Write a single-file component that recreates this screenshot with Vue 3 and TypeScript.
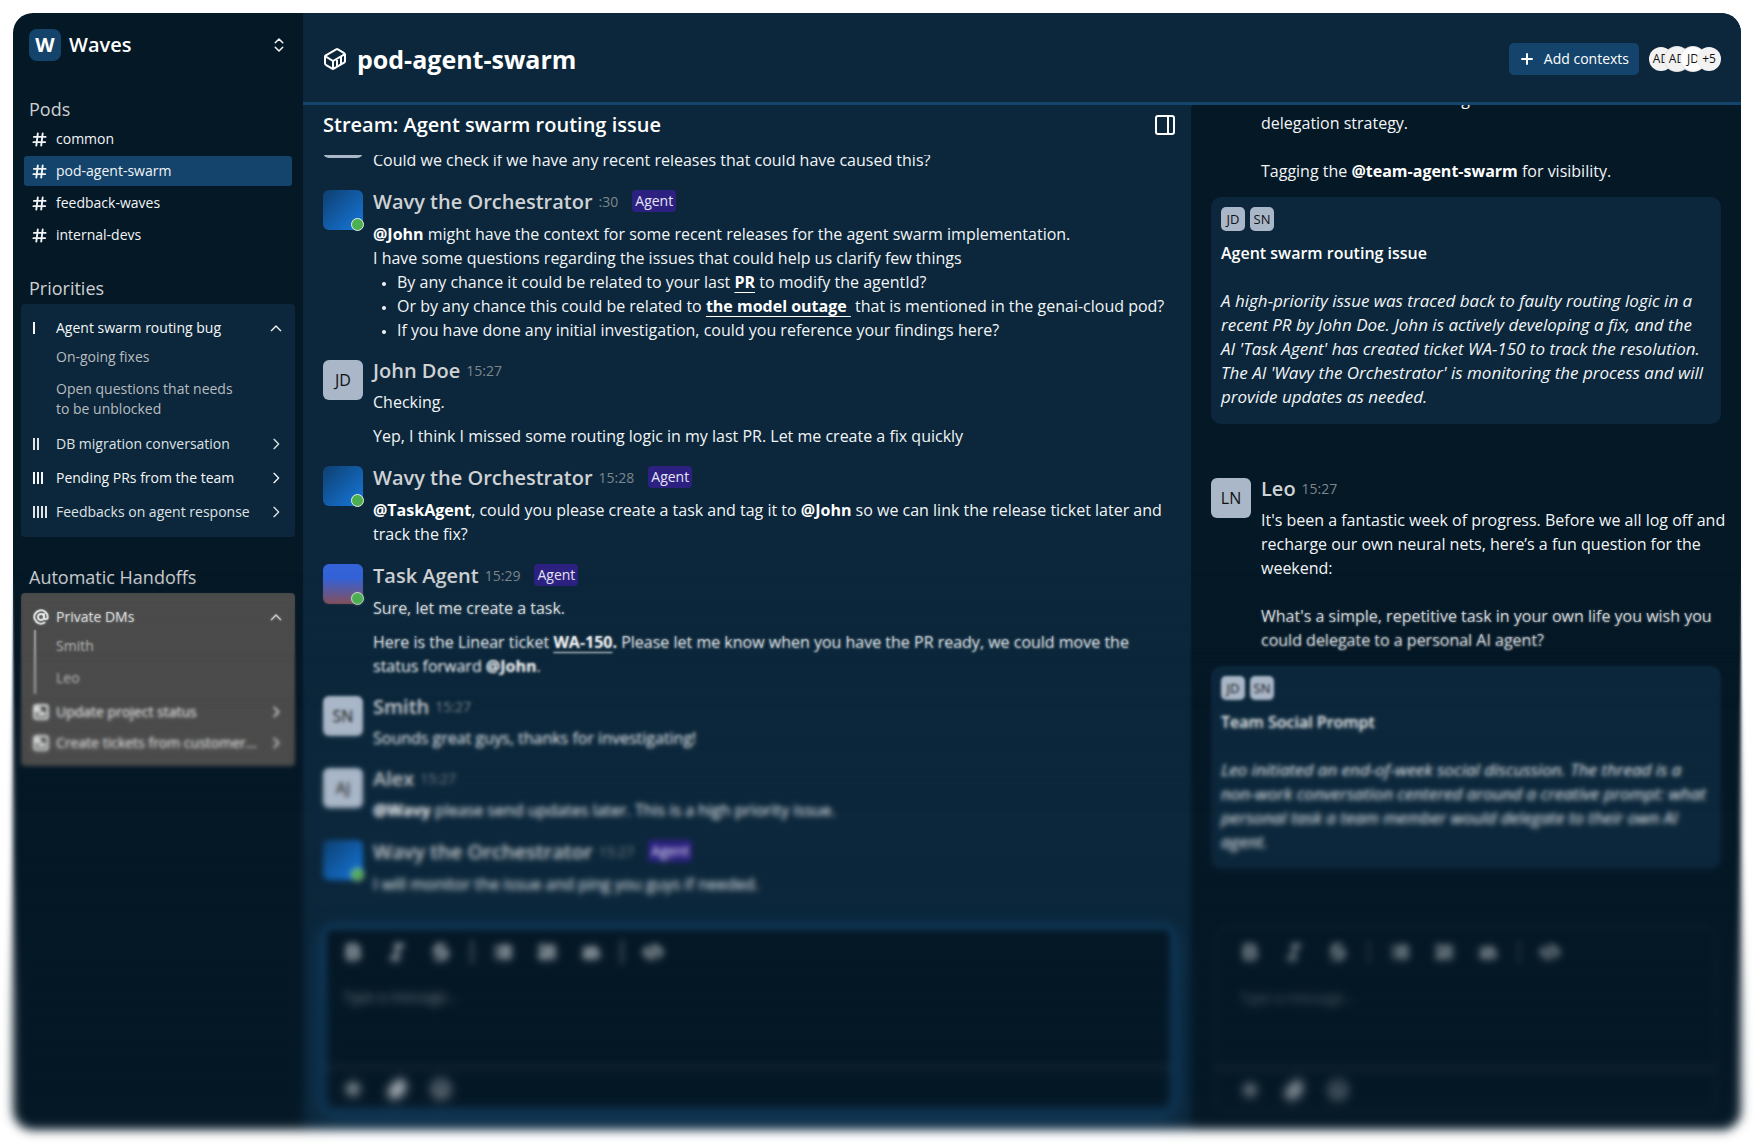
<script setup lang="ts">
import { ref } from 'vue'

type Kind = 'text' | 'bold' | 'link' | 'break'
interface Part { kind: Kind; text: string }
interface Block { type: 'para' | 'list'; items: Part[][] }
interface Message {
  id: number
  author?: string
  time?: string
  initials?: string
  avatar: 'plain' | 'wavy' | 'task'
  agent: boolean
  blocks: Block[]
}

const t = (text: string): Part => ({ kind: 'text', text })
const b = (text: string): Part => ({ kind: 'bold', text })
const a = (text: string): Part => ({ kind: 'link', text })
const br: Part = { kind: 'break', text: '' }
const para = (...parts: Part[]): Block => ({ type: 'para', items: [parts] })

const pods = ['common', 'pod-agent-swarm', 'feedback-waves', 'internal-devs']
const activePod = ref('pod-agent-swarm')

const priorities = [
  { bars: 2, label: 'DB migration conversation', strong: false },
  { bars: 3, label: 'Pending PRs from the team', strong: true },
  { bars: 4, label: 'Feedbacks on agent response', strong: false },
]
const handoffs = ['Update project status', 'Create tickets from customer...']
const members = ['AD', 'AD', 'JD', '+5']

const messages: Message[] = [
  {
    id: 1, avatar: 'plain', agent: false,
    blocks: [para(t('Could we check if we have any recent releases that could have caused this?'))],
  },
  {
    id: 2, author: 'Wavy the Orchestrator', time: ':30', avatar: 'wavy', agent: true,
    blocks: [
      para(
        b('@John'), t(' might have the context for some recent releases for the agent swarm implementation.'), br,
        t('I have some questions regarding the issues that could help us clarify few things'),
      ),
      {
        type: 'list',
        items: [
          [t('By any chance it could be related to your last '), a('PR'), t(' to modify the agentId?')],
          [t('Or by any chance this could be related to '), a('the model outage\u00a0'), t(' that is mentioned in the genai-cloud pod?')],
          [t('If you have done any initial investigation, could you reference your findings here?')],
        ],
      },
    ],
  },
  {
    id: 3, author: 'John Doe', time: '15:27', initials: 'JD', avatar: 'plain', agent: false,
    blocks: [
      para(t('Checking.')),
      para(t('Yep, I think I missed some routing logic in my last PR. Let me create a fix quickly')),
    ],
  },
  {
    id: 4, author: 'Wavy the Orchestrator', time: '15:28', avatar: 'wavy', agent: true,
    blocks: [
      para(
        b('@TaskAgent'), t(', could you please create a task and tag it to '), b('@John'),
        t(' so we can link the release ticket later and'), br, t('track the fix?'),
      ),
    ],
  },
  {
    id: 5, author: 'Task Agent', time: '15:29', avatar: 'task', agent: true,
    blocks: [
      para(t('Sure, let me create a task.')),
      para(
        t('Here is the Linear ticket '), a('WA-150'), b('.'),
        t(' Please let me know when you have the PR ready, we could move the'), br,
        t('status forward '), b('@John'), t('.'),
      ),
    ],
  },
  {
    id: 6, author: 'Smith', time: '15:27', initials: 'SN', avatar: 'plain', agent: false,
    blocks: [para(t('Sounds great guys, thanks for investigating!'))],
  },
  {
    id: 7, author: 'Alex', time: '15:27', initials: 'AJ', avatar: 'plain', agent: false,
    blocks: [para(b('@Wavy'), t(' please send updates later. This is a high priority issue.'))],
  },
  {
    id: 8, author: 'Wavy the Orchestrator', time: '15:27', avatar: 'wavy', agent: true,
    blocks: [para(t('I will monitor the issue and ping you guys if needed.'))],
  },
]

const formatTools = [
  { name: 'Bold', paths: ['M6 12h9a4 4 0 0 1 0 8H7a1 1 0 0 1-1-1V5a1 1 0 0 1 1-1h7a4 4 0 0 1 0 8'], width: 4 },
  { name: 'Italic', paths: ['M19 4h-9', 'M14 20H5', 'M15 4 9 20'], width: 4 },
  { name: 'Strikethrough', paths: ['M16 4H9a3 3 0 0 0-2.8 4', 'M14 12a4 4 0 0 1 0 8H6', 'M4 12h16'], width: 4 },
]
const listTools = [
  { name: 'Bulleted list', paths: ['M9 6h12', 'M9 12h12', 'M9 18h12', 'M4 6h.01', 'M4 12h.01', 'M4 18h.01'], width: 4 },
  { name: 'Numbered list', paths: ['M10 6h11', 'M10 12h11', 'M10 18h11', 'M4 5l1-1v5', 'M4 15h3l-3 4h3'], width: 4 },
  { name: 'Quote', paths: ['M4 8h9', 'M4 14h7', 'M14 11l3-4 4 10', 'M4 18h14'], width: 4 },
]
const codeTools = [
  { name: 'Code', paths: ['m18 17 5-5-5-5', 'm6 7-5 5 5 5', 'm14 4-4 16'], width: 4 },
]
const toolGroups = [formatTools, listTools, codeTools]
const attachTools = [
  { name: 'Add', paths: ['M12 4v16', 'M4 12h16', 'M7 7l10 10', 'M17 7 7 17'], width: 3 },
  { name: 'Attach file', paths: ['m16 6-8.4 8.6a2 2 0 0 0 2.8 2.8l8.4-8.6a4 4 0 1 0-5.6-5.6L4.8 11.9a6 6 0 1 0 8.5 8.5l8.4-8.6'], width: 4 },
  { name: 'Emoji', paths: ['M22 12a10 10 0 1 1-20 0 10 10 0 0 1 20 0', 'M8 14s1.5 2 4 2 4-2 4-2', 'M9 9h.01', 'M15 9h.01'], width: 3 },
]

const streamDraft = ref('')
const threadDraft = ref('')
</script>

<template>
  <div class="page">
    <div class="window">
      <nav class="sidebar" aria-label="Workspace">
        <button class="workspace" type="button">
          <span class="logo">W</span>
          <span class="workspace-name">Waves</span>
          <svg class="icon-18" viewBox="0 0 24 24"><path d="m7 15 5 5 5-5M7 9l5-5 5 5" /></svg>
        </button>

        <section class="group">
          <h2>Pods</h2>
          <button
            v-for="pod in pods" :key="pod" type="button" class="pod"
            :class="{ active: pod === activePod }" @click="activePod = pod"
          >
            <svg class="hash" viewBox="0 0 16 16"><path d="M6.2 1.5 4.6 14.5M11.4 1.5 9.8 14.5M2 5.2h12.5M1.500 10.8h12.5" /></svg>
            <span>{{ pod }}</span>
          </button>
        </section>

        <section class="group priorities">
          <h2>Priorities</h2>
          <div class="card">
            <button type="button" class="row strong">
              <span class="bars"><i /></span>
              <span class="row-label">Agent swarm routing bug</span>
              <svg class="icon-16" viewBox="0 0 24 24"><path d="m5 16 7-7 7 7" /></svg>
            </button>
            <a class="sub" href="#fixes">On-going fixes</a>
            <a class="sub two-line" href="#questions">Open questions that needs<br />to be unblocked</a>
            <button v-for="p in priorities" :key="p.label" type="button" class="row tall" :class="{ strong: p.strong }">
              <span class="bars"><i v-for="n in p.bars" :key="n" /></span>
              <span class="row-label">{{ p.label }}</span>
              <svg class="icon-16" viewBox="0 0 24 24"><path d="m9 5 7 7-7 7" /></svg>
            </button>
          </div>
        </section>

        <section class="group handoffs">
          <h2>Automatic Handoffs</h2>
          <div class="card grey">
            <button type="button" class="row strong">
              <svg class="lead" viewBox="0 0 24 24"><circle cx="12" cy="12" r="4.5" /><path d="M16.5 7.500v6a3 3 0 0 0 5.5 0V12a10 10 0 1 0-4.500 8.300" /></svg>
              <span class="row-label">Private DMs</span>
              <svg class="icon-16" viewBox="0 0 24 24"><path d="m5 16 7-7 7 7" /></svg>
            </button>
            <div class="dms">
              <a href="#smith">Smith</a>
              <a href="#leo">Leo</a>
            </div>
            <button v-for="h in handoffs" :key="h" type="button" class="row strong">
              <svg class="lead" viewBox="0 0 24 24"><rect x="2" y="2" width="20" height="20" rx="3" /><path d="M5 6h5v5H5zM7 16h10M13 12v4M17 13v3" /></svg>
              <span class="row-label">{{ h }}</span>
              <svg class="icon-16" viewBox="0 0 24 24"><path d="m9 5 7 7-7 7" /></svg>
            </button>
          </div>
        </section>
      </nav>

      <div class="content">
        <header class="topbar">
          <svg class="icon-24" viewBox="0 0 24 24"><path d="M22 7.700c0-.6-.4-1.200-.8-1.500l-6.300-3.900a1.720 1.720 0 0 0-1.700 0l-10.300 6c-.5.2-.9.8-.9 1.400v6.600c0 .5.4 1.200.8 1.500l6.300 3.900a1.720 1.720 0 0 0 1.700 0l10.300-6c.5-.3.9-1 .9-1.500ZM10 21.900V14L2.100 9.100M10 14l11.900-6.900M14 19.800v-8.100M18 17.500V9.400" /></svg>
          <h1>pod-agent-swarm</h1>
          <button type="button" class="add">
            <svg class="icon-16" viewBox="0 0 16 16"><path d="M8 3v10M3 8h10" /></svg>
            Add contexts
          </button>
          <div class="members">
            <span v-for="(m, i) in members" :key="i" :class="'m' + i">{{ m }}</span>
          </div>
        </header>

        <div class="columns">
          <main class="stream">
            <div class="stream-head">
              <h2>Stream: Agent swarm routing issue</h2>
              <button type="button" class="plain" aria-label="Toggle side panel">
                <svg class="icon-24" viewBox="0 0 24 24"><rect x="3" y="3" width="18" height="18" rx="2" /><path d="M15 3v18" /></svg>
              </button>
            </div>

            <div class="feed">
              <article v-for="m in messages" :key="m.id" class="message">
                <div class="avatar" :class="m.avatar">{{ m.initials }}<i v-if="m.agent" class="online" /></div>
                <div class="body">
                  <div class="meta" :class="{ agent: m.agent }">
                    <strong>{{ m.author }}</strong>
                    <time>{{ m.time }}</time>
                    <span v-if="m.agent" class="badge">Agent</span>
                  </div>
                  <template v-for="(block, bi) in m.blocks" :key="bi">
                    <p v-if="block.type === 'para'"><template v-for="(part, pi) in block.items[0]" :key="pi"><br v-if="part.kind === 'break'" /><b v-else-if="part.kind === 'bold'">{{ part.text }}</b><a v-else-if="part.kind === 'link'" href="#ref">{{ part.text }}</a><template v-else>{{ part.text }}</template></template></p>
                    <ul v-else>
                      <li v-for="(item, ii) in block.items" :key="ii"><template v-for="(part, pi) in item" :key="pi"><a v-if="part.kind === 'link'" href="#ref">{{ part.text }}</a><template v-else>{{ part.text }}</template></template></li>
                    </ul>
                  </template>
                </div>
              </article>
            </div>

            <form class="composer focused" @submit.prevent>
              <div class="tools">
                <template v-for="(group, gi) in toolGroups" :key="gi">
                  <i v-if="gi > 0" class="sep" />
                  <button v-for="tool in group" :key="tool.name" type="button" :aria-label="tool.name">
                    <svg viewBox="0 0 24 24" :stroke-width="tool.width"><path v-for="p in tool.paths" :key="p" :d="p" /></svg>
                  </button>
                </template>
              </div>
              <textarea v-model="streamDraft" aria-label="Message the stream" placeholder="Type a message..." />
              <div class="tools bottom">
                <button v-for="tool in attachTools" :key="tool.name" type="button" :aria-label="tool.name">
                  <svg viewBox="0 0 24 24" :stroke-width="tool.width"><path v-for="p in tool.paths" :key="p" :d="p" /></svg>
                </button>
              </div>
            </form>
          </main>

          <aside class="thread">
            <div class="feed">
              <article class="message">
                <div class="body indent">
                  <p>Let us look into the other agent<br />delegation strategy.</p>
                  <p class="spaced">Tagging the <b>@team-agent-swarm</b> for visibility.</p>
                </div>
              </article>
              <section class="summary">
                <div class="people"><span>JD</span><span>SN</span></div>
                <h3>Agent swarm routing issue</h3>
                <p>A high-priority issue was traced back to faulty routing logic in a<br />recent PR by John Doe. John is actively developing a fix, and the<br />AI 'Task Agent' has created ticket WA-150 to track the resolution.<br />The AI 'Wavy the Orchestrator' is monitoring the process and will<br />provide updates as needed.</p>
              </section>

              <article class="message later">
                <div class="avatar plain">LN</div>
                <div class="body">
                  <div class="meta"><strong>Leo</strong><time>15:27</time></div>
                  <p>It's been a fantastic week of progress. Before we all log off and<br />recharge our own neural nets, here’s a fun question for the<br />weekend:</p>
                  <p class="spaced">What's a simple, repetitive task in your own life you wish you<br />could delegate to a personal AI agent?</p>
                </div>
              </article>
              <section class="summary">
                <div class="people"><span>JD</span><span>SN</span></div>
                <h3>Team Social Prompt</h3>
                <p>Leo initiated an end-of-week social discussion. The thread is a<br />non-work conversation centered around a creative prompt: what<br />personal task a team member would delegate to their own AI<br />agent.</p>
              </section>
            </div>

            <form class="composer" @submit.prevent>
              <div class="tools">
                <template v-for="(group, gi) in toolGroups" :key="gi">
                  <i v-if="gi > 0" class="sep" />
                  <button v-for="tool in group" :key="tool.name" type="button" :aria-label="tool.name">
                    <svg viewBox="0 0 24 24" :stroke-width="tool.width"><path v-for="p in tool.paths" :key="p" :d="p" /></svg>
                  </button>
                </template>
              </div>
              <textarea v-model="threadDraft" aria-label="Reply in thread" placeholder="Type a message..." />
              <div class="tools bottom">
                <button v-for="tool in attachTools" :key="tool.name" type="button" :aria-label="tool.name">
                  <svg viewBox="0 0 24 24" :stroke-width="tool.width"><path v-for="p in tool.paths" :key="p" :d="p" /></svg>
                </button>
              </div>
            </form>
          </aside>
        </div>
      </div>
    </div>

    <!-- progressive blur that grows towards the bottom edge -->
    <div v-for="n in 6" :key="n" class="haze" :class="'haze-' + n" />
  </div>
</template>

<style>
html,
body {
  margin: 0;
  background: #fff;
}
</style>

<style scoped>
.page {
  position: relative;
  box-sizing: border-box;
  height: 100vh;
  padding: 13px;
  overflow: hidden;
  background: #fff;
  font-family: "Open Sans", "Noto Sans", sans-serif;
  font-size: 16px;
  line-height: 24px;
  color: #f2f5f7;
}
.window {
  display: flex;
  height: 100%;
  border-radius: 20px;
  overflow: hidden;
  background: #051826;
}
h1, h2, h3, p, ul { margin: 0; }
button, textarea { font: inherit; color: inherit; }
button {
  border: 0;
  padding: 0;
  background: none;
  text-align: left;
}
svg {
  flex: none;
  fill: none;
  stroke: currentColor;
  stroke-linecap: round;
  stroke-linejoin: round;
}
.icon-16 { width: 16px; height: 16px; stroke-width: 2; }
.icon-18 { width: 18px; height: 18px; stroke-width: 2; }
.icon-24 { width: 24px; height: 24px; stroke-width: 2; }

/* sidebar */
.sidebar {
  flex: none;
  box-sizing: border-box;
  width: 290px;
  padding: 16px 8px;
}
.workspace {
  display: flex;
  align-items: center;
  gap: 8px;
  width: 100%;
  padding: 0 7px 0 8px;
}
.logo {
  width: 32px;
  border-radius: 8px;
  background: #14446b;
  color: #fff;
  font-size: 20px;
  font-weight: 700;
  line-height: 32px;
  text-align: center;
}
.workspace-name {
  flex: 1;
  color: #fff;
  font-size: 20px;
  font-weight: 600;
}
.group { margin-top: 36px; }
.group h2 {
  padding-left: 8px;
  color: #cdd0d2;
  font-size: 18px;
  font-weight: 400;
  line-height: 24px;
}
.pod {
  display: flex;
  align-items: center;
  gap: 9px;
  width: calc(100% - 6px);
  height: 30px;
  margin: 2px 3px 0;
  padding: 0 8px;
  border-radius: 3px;
  font-size: 14px;
  font-weight: 500;
}
h2 + .pod { margin-top: 3px; }
.pod.active {
  background: #14446b;
  font-weight: 400;
}
.hash { width: 15px; height: 15px; stroke-width: 2; }
.priorities { margin-top: 26px; }
.handoffs { margin-top: 28px; }
.card {
  margin-top: 4px;
  padding: 8px 11px 8px 12px;
  border-radius: 4px;
  background: #0c273b;
  font-size: 14px;
}
.card.grey { background: #4b4b4b; }
.row {
  display: flex;
  align-items: center;
  width: 100%;
  height: 31px;
  color: #dfe3e6;
}
.row.tall { height: 34px; }
.row.strong { color: #f5f7f8; font-weight: 500; }
.row-label { flex: 1; white-space: nowrap; }
.bars {
  display: flex;
  gap: 1px;
  width: 23px;
}
.bars i {
  width: 2px;
  height: 12px;
  margin-right: 1px;
  background: currentColor;
}
.sub {
  display: block;
  padding: 4px 0 4px 23px;
  color: #b7bcc0;
  line-height: 20px;
  text-decoration: none;
}
.two-line { padding: 8px 0 8px 23px; }
.lead { width: 16px; height: 16px; margin-right: 7px; stroke-width: 3; }
.dms {
  margin: -2px 0 2px 1px;
  border-left: 2px solid #a5a5a5;
  padding-left: 20px;
}
.dms a {
  display: block;
  height: 32px;
  color: #b9b9b9;
  line-height: 32px;
  text-decoration: none;
}

/* top bar */
.content {
  flex: 1;
  display: flex;
  flex-direction: column;
  min-width: 0;
  background: #0c273b;
}
.topbar {
  flex: none;
  display: flex;
  align-items: center;
  box-sizing: border-box;
  height: 92px;
  padding: 2px 20px 0;
  border-bottom: 3px solid #14446b;
  color: #fff;
}
.topbar h1 {
  flex: 1;
  margin-left: 10px;
  font-size: 25px;
  font-weight: 700;
  line-height: 32px;
}
.add {
  display: flex;
  align-items: center;
  gap: 9px;
  height: 32px;
  padding: 0 10px;
  border-radius: 5px;
  background: #14446b;
  font-size: 14px;
  font-weight: 500;
}
.members {
  display: flex;
  margin-left: 10px;
}
.members span {
  width: 24px;
  height: 24px;
  margin-right: -8px;
  border-radius: 12px;
  background: #f2f2f2;
  color: #111;
  font-size: 12px;
  font-weight: 500;
  text-align: center;
}
.members .m1, .members .m2 { box-shadow: 0 0 0 1px #e2e2e2; }
.members .m2 { background: #fff; }
.members .m3 { margin-right: 0; }

/* columns */
.columns {
  flex: 1;
  display: flex;
  min-height: 0;
}
.stream {
  flex: 888;
  display: flex;
  flex-direction: column;
  min-width: 0;
}
.stream-head {
  flex: none;
  display: flex;
  align-items: center;
  justify-content: space-between;
  height: 40px;
  padding: 0 14px 10px 20px;
}
.stream-head h2 {
  color: #fff;
  font-size: 20px;
  font-weight: 600;
}
.plain { height: 24px; color: #fff; }
.feed {
  flex: 1;
  display: flex;
  flex-direction: column;
  justify-content: flex-end;
  min-height: 0;
  overflow: hidden;
}
.stream .feed {
  gap: 18px;
  padding: 0 0 30px 20px;
}
.message {
  flex: none;
  display: flex;
  gap: 10px;
}
.avatar {
  position: relative;
  flex: none;
  width: 40px;
  height: 40px;
  border-radius: 6px;
  background: #a9b7c8;
  color: #111;
  font-weight: 500;
  line-height: 40px;
  text-align: center;
}
.avatar.wavy { background: linear-gradient(135deg, #0d3f70, #1778dc); }
.avatar.task { background: linear-gradient(#3463d8 35%, #85505c); }
.online {
  position: absolute;
  right: -1px;
  bottom: -1px;
  width: 11px;
  height: 11px;
  border: 1px solid #e8efe8;
  border-radius: 50%;
  background: #4caf50;
}
.body { flex: 1; min-width: 0; white-space: nowrap; }
.body.indent { padding-left: 50px; }
.meta {
  display: flex;
  align-items: center;
  height: 22px;
  margin-bottom: 8px;
}
.meta.agent { height: 24px; }
.meta strong {
  color: #cfd2d4;
  font-size: 20px;
  font-weight: 600;
}
.meta time {
  margin-left: 6px;
  color: #7d868d;
  font-size: 14px;
}
.badge {
  align-self: flex-start;
  height: 22px;
  margin-left: 14px;
  padding: 0 3px;
  border-radius: 4px;
  background: #2c2180;
  color: #e6e4f5;
  font-size: 14px;
  line-height: 22px;
}
.stream p + p { margin-top: 10px; }
.body b, .body a {
  color: #fff;
  font-weight: 700;
}
.body a { text-underline-offset: 4px; }
.body ul { padding-left: 24px; }
.body li::marker { font-size: 12px; }

/* composer */
.composer {
  flex: none;
  display: flex;
  flex-direction: column;
  box-sizing: border-box;
  height: 186px;
  margin: 0 24px 18px;
  border: 2px solid #13232e;
  border-radius: 10px;
  background: #051826;
  color: #8b959c;
}
.composer.focused {
  margin: 0 17px 18px 20px;
  border: 3px solid #14446b;
  box-shadow: 0 4px 20px #14446b;
  color: #b4bbc0;
}
.tools {
  display: flex;
  align-items: center;
  gap: 14px;
  height: 48px;
  padding: 0 18px;
}
.focused .tools {
  height: 46px;
  padding: 0 12px;
}
.tools button {
  display: flex;
  justify-content: center;
  width: 30px;
}
.tools svg { width: 20px; height: 20px; }
.sep {
  width: 2px;
  height: 24px;
  margin: 0 1px;
  background: #35414b;
}
.focused .sep { background: #6a747c; }
.composer textarea {
  flex: 1;
  padding: 10px 23px;
  border: 0;
  outline: 0;
  resize: none;
  background: none;
  font-size: 14px;
}
.focused textarea { padding: 10px 17px; }
.composer textarea::placeholder { color: #565f67; opacity: 1; }
.focused textarea::placeholder { color: #767f86; }
.tools.bottom { border-top: 3px solid #1d2d39; height: 40px; }

/* thread */
.thread {
  flex: 550;
  display: flex;
  flex-direction: column;
  min-width: 0;
  border-radius: 4px 0 0 0;
  background: #051826;
}
.thread .feed { padding: 0 20px 57px; }
.spaced { margin-top: 24px; }
.summary {
  flex: none;
  margin-top: 14px;
  padding: 10px 10px 15px;
  border-radius: 10px;
  background: #0c273b;
}
.people { display: flex; gap: 5px; }
.people span {
  width: 24px;
  border-radius: 5px;
  background: #a9b7c8;
  color: #111;
  font-size: 13px;
  font-weight: 500;
  text-align: center;
}
.summary h3 {
  margin-top: 10px;
  color: #fff;
  font-size: 16px;
  font-weight: 600;
  line-height: 24px;
}
.summary p {
  margin-top: 24px;
  font-size: 17px;
  font-style: italic;
  white-space: nowrap;
}
.later { margin-top: 54px; }

/* blur layers */
.haze {
  position: absolute;
  inset: 0;
  pointer-events: none;
}
.haze-1 { backdrop-filter: blur(1px); mask-image: linear-gradient(transparent 50%, #000 58%); }
.haze-2 { backdrop-filter: blur(1px); mask-image: linear-gradient(transparent 57%, #000 62%); }
.haze-3 { backdrop-filter: blur(2px); mask-image: linear-gradient(transparent 61%, #000 71%); }
.haze-4 { backdrop-filter: blur(2px); mask-image: linear-gradient(transparent 74%, #000 80%); }
.haze-5 { backdrop-filter: blur(3px); mask-image: linear-gradient(transparent 80%, #000 88%); }
.haze-6 { backdrop-filter: blur(2px); mask-image: linear-gradient(transparent 88%, #000 96%); }
</style>
